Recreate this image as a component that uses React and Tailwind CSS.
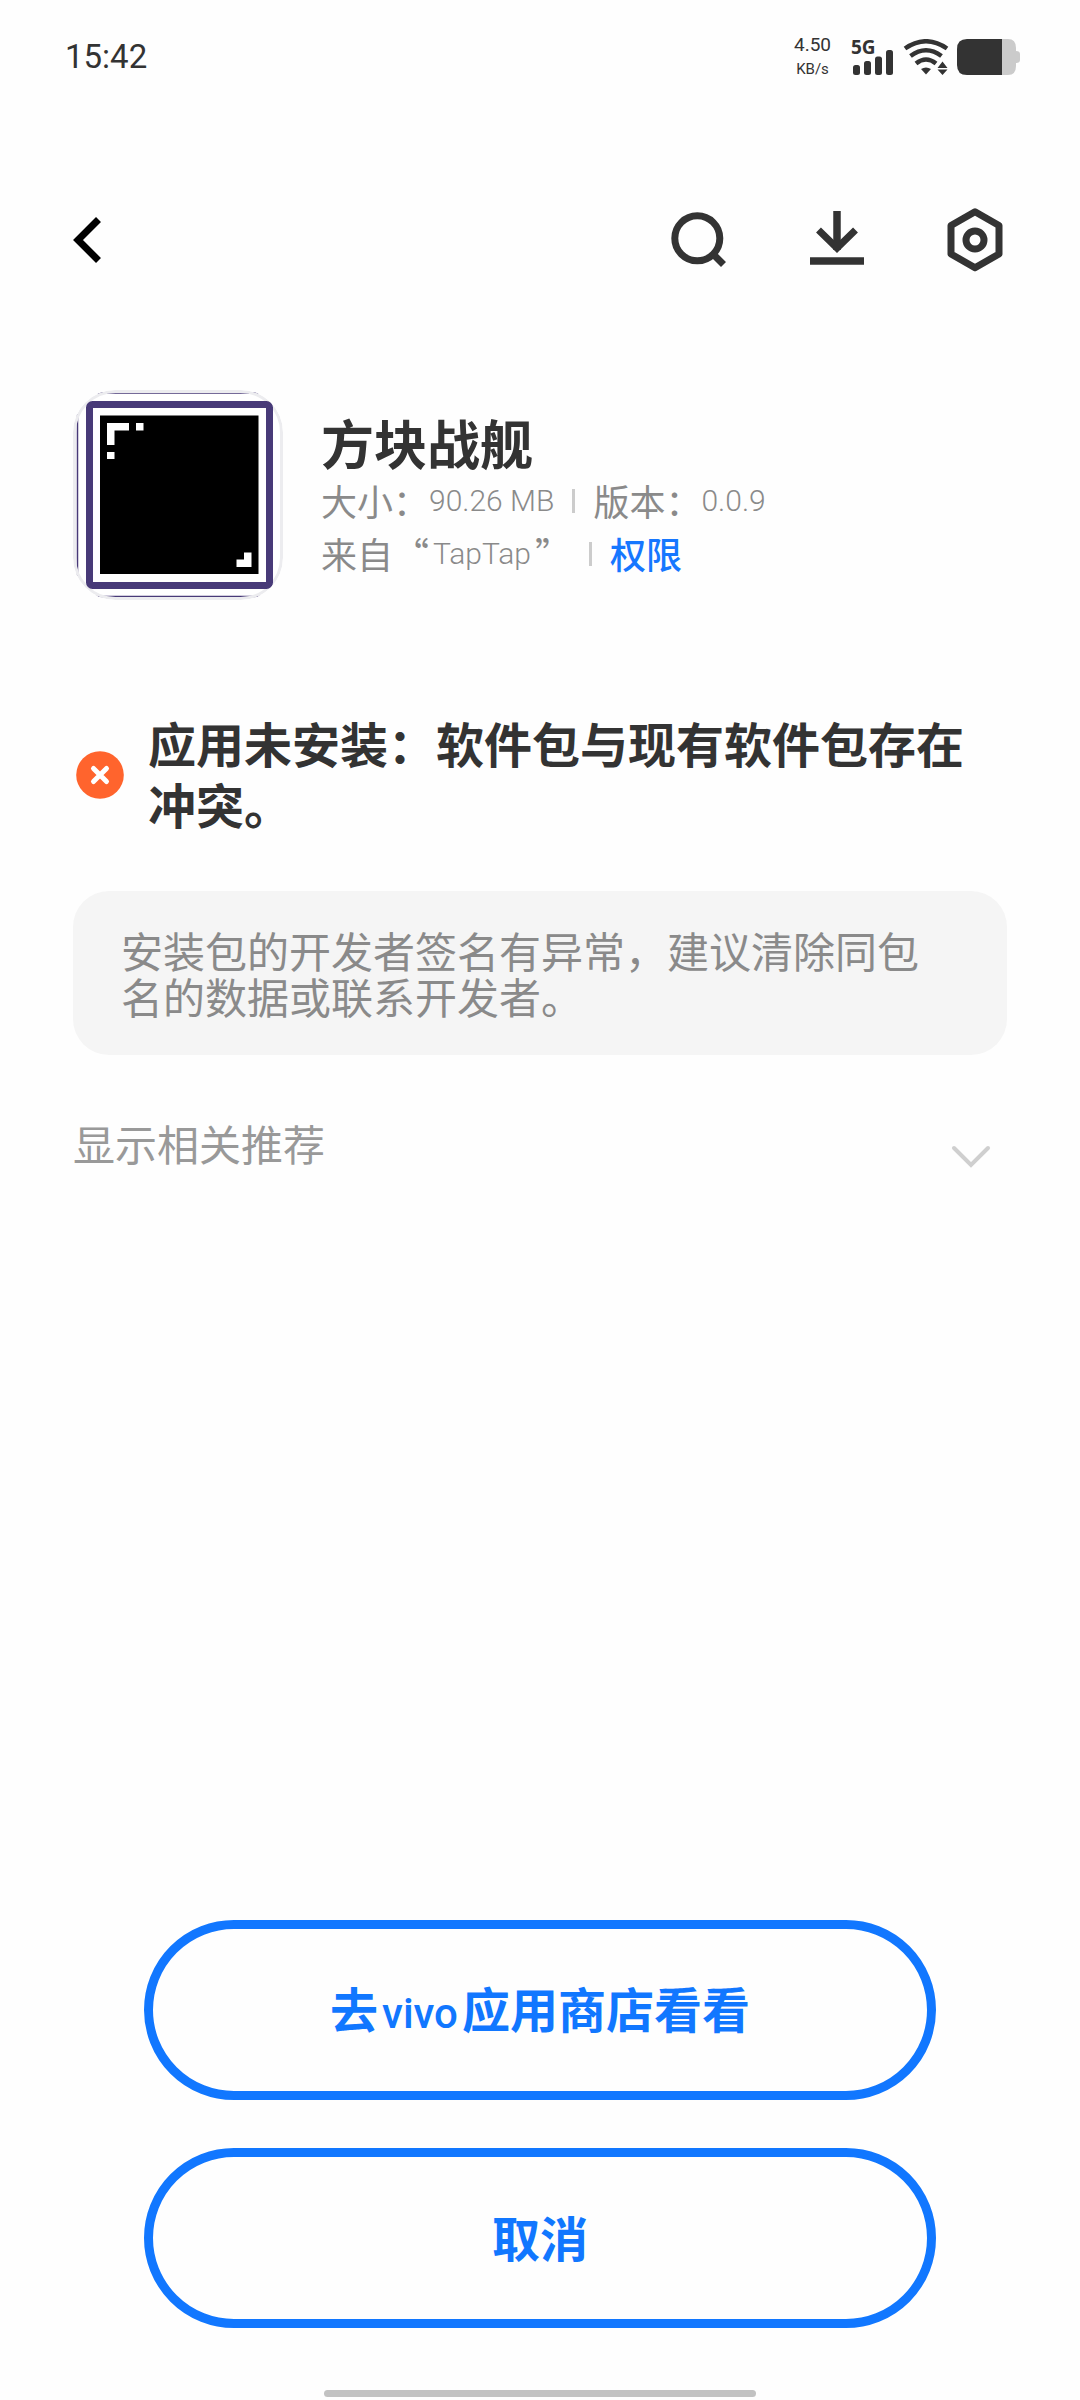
import React, { useState } from 'react'

const StatusBar = () => (
    <div className="flex items-center justify-between h-[114px] pl-[65px] pr-[60px] text-[#333333] font-['Roboto',sans-serif]">
        <span className="pb-0.5 text-[33px] leading-none">15:42</span>
        <div className="flex items-center">
            <div className="flex flex-col items-center leading-6">
                <span className="text-[19px]">4.50</span>
                <span className="text-[15px]">KB/s</span>
            </div>
            <div className="grid ml-5 w-[44px] h-9">
                <span className="[grid-area:1/1] text-[19px] leading-4 font-bold font-['Noto_Sans',sans-serif]">5G</span>
                <svg className="[grid-area:1/1] self-end" width="44" height="26" viewBox="0 0 44 26" fill="currentColor">
                    <rect x="2" y="16" width="7" height="10" rx="2.5" />
                    <rect x="13" y="12" width="7" height="14" rx="2.5" />
                    <rect x="24" y="7.5" width="7" height="18.5" rx="2.5" />
                    <rect x="35" y="1" width="7" height="25" rx="2.5" />
                </svg>
            </div>
            <svg className="ml-2" width="46" height="36" viewBox="0 0 46 36" fill="none" stroke="currentColor" strokeWidth="4.5">
                <path d="M2 9.5Q23 -5 44 9.5" />
                <path d="M7.5 17Q23 5.5 38.5 17" />
                <path d="M13 24.5Q23 16.5 33 24.5" />
                <path d="M18 30Q23 27 28 30L23 35.5Z" fill="currentColor" stroke="none" />
                <path d="M39.5 22.5L44.5 29H34.5ZM39.5 36L44.5 30.5H34.5Z" fill="currentColor" stroke="none" />
            </svg>
            <svg className="ml-2" width="63" height="36" viewBox="0 0 63 36">
                <path d="M45 0H51Q59 0 59 9V12Q63 12 63 15V21Q63 24 59 24V27Q59 36 51 36H45Z" fill="#cbcbcb" />
                <path d="M45 0H10Q0 0 0 10V26Q0 36 10 36H45Z" fill="#333333" />
            </svg>
        </div>
    </div>
)

const Header = () => (
    <header className="flex items-center justify-between pt-[94px] px-[73px] text-[#333333]">
        <button type="button" aria-label="返回">
            <svg width="32" height="64" viewBox="0 0 32 64" fill="none" stroke="#000" strokeWidth="7">
                <path d="M25.5 11.5L5 32L25.5 52.5" />
            </svg>
        </button>
        <div className="flex gap-[75px]">
            <button type="button" aria-label="搜索">
                <svg width="64" height="64" viewBox="0 0 64 64" fill="none" stroke="currentColor" strokeWidth="7">
                    <circle cx="32.3" cy="30.3" r="22.5" />
                    <path d="M48 46L58.5 56.5" />
                </svg>
            </button>
            <button type="button" aria-label="下载管理">
                <svg width="64" height="64" viewBox="0 0 64 64" fill="none" stroke="currentColor" strokeWidth="7.5">
                    <path d="M33 3V42" />
                    <path d="M14.5 22L33 40L51.5 22" strokeWidth="7" />
                    <path d="M6 53H60" />
                </svg>
            </button>
            <button type="button" aria-label="设置">
                <svg width="64" height="64" viewBox="0 0 64 64" fill="none" stroke="currentColor" strokeWidth="7" strokeLinejoin="round">
                    <path d="M32 3.8L56 17.5V46L32 59.8L8 46V17.5Z" />
                    <circle cx="32" cy="32" r="9" />
                </svg>
            </button>
        </div>
    </header>
)

const AppIcon = () => (
    <svg className="shrink-0 rounded-[42px]" width="210" height="210" viewBox="0 0 210 210">
        <rect width="210" height="210" fill="#fff" />
        <path d="M4.5 24V186M20 3H190M20 206.5H190" stroke="#483a78" strokeWidth="1.5" fill="none" />
        <rect x="1.5" y="1.5" width="207" height="207" rx="41" fill="none" stroke="#ececef" strokeWidth="3" />
        <rect x="16.5" y="14.5" width="180" height="181" rx="3" fill="#fff" stroke="#483a78" strokeWidth="7" />
        <rect x="27" y="25.5" width="158.5" height="158.5" fill="#000" />
        <path
            d="M34 33H56V40.5H41.5V55H34ZM63 33H70.5V40.5H63ZM34 62H41.5V69H34ZM171 162.5H178.5V177H163.5V169.5H171Z"
            fill="#fff"
        />
    </svg>
)

const Divider = () => <span className="w-[3px] h-6 bg-[#cccccc]" />

const AppInfo = () => (
    <section className="flex gap-[38px] pt-[118px] px-[73px]">
        <AppIcon />
        <div className="pt-6 text-[36px] leading-[53px] text-[#8a8a8a]">
            <h1 className="mb-1 text-[53px] leading-[56px] font-bold text-[#333333]">方块战舰</h1>
            <div className="flex items-center gap-[18px]">
                <span className="flex items-center">
                    大小：<span className="text-[30px] font-light font-['Roboto',sans-serif]">90.26 MB</span>
                </span>
                <Divider />
                <span className="flex items-center">
                    版本：<span className="text-[30px] font-light font-['Roboto',sans-serif]">0.0.9</span>
                </span>
            </div>
            <div className="flex items-center gap-[18px]">
                <span className="flex items-center">
                    来自“<span className="mx-1 text-[30px] font-light font-['Roboto',sans-serif]">TapTap</span>”
                </span>
                <Divider />
                <a href="#permissions" className="font-medium text-[#1677ff]">权限</a>
            </div>
        </div>
    </section>
)

const InstallError = () => (
    <section className="pt-[112px] px-[73px]">
        <div className="flex items-center gap-6 pl-[3px]">
            <svg className="shrink-0" width="48" height="48" viewBox="0 0 48 48">
                <circle cx="24" cy="24" r="23.8" fill="#ff642d" />
                <path d="M17.5 17.5L30.5 30.5M30.5 17.5L17.5 30.5" stroke="#fff" strokeWidth="5" strokeLinecap="round" />
            </svg>
            <h2 className="pb-1 text-[48px] leading-[61px] font-bold text-[#333333]">
                应用未安装：软件包与现有软件包存在冲突。
            </h2>
        </div>
        <p className="mt-[53px] px-12 py-9 rounded-[36px] bg-[#f5f5f5] text-[42px] leading-[46px] text-[#8a8a8a]">
            安装包的开发者签名有异常，建议清除同包名的数据或联系开发者。
        </p>
    </section>
)

const Recommendations = () => {
    const [open, setOpen] = useState(false)

    return (
        <button
            type="button"
            aria-expanded={open}
            onClick={() => setOpen(!open)}
            className="flex items-center justify-between mt-[58px] ml-[73px] mr-[88px] text-[42px] leading-[60px] text-[#999999]"
        >
            显示相关推荐
            <svg className="mt-7" width="42" height="24" viewBox="0 0 42 24" fill="none" stroke="#cfcfcf" strokeWidth="4" strokeLinecap="round">
                <path d="M4 3L21 20L38 3" />
            </svg>
        </button>
    )
}

const ACTION_CLASS =
    'w-full h-[180px] pb-1 rounded-full border-[9px] border-[#1177ff] text-[48px] font-bold text-[#1177ff]'

const App = () => (
    <div
        lang="zh-CN"
        className="flex flex-col min-h-screen bg-[#fefefe] font-['Noto_Sans_CJK_SC',sans-serif]"
    >
        <StatusBar />
        <Header />
        <main className="flex flex-col flex-1">
            <AppInfo />
            <InstallError />
            <Recommendations />
            <div className="flex flex-col gap-12 mt-auto pt-12 px-36">
                <button type="button" className={ACTION_CLASS}>
                    去<span className="mx-1 text-[42px] font-medium font-['Roboto',sans-serif]">vivo</span>应用商店看看
                </button>
                <button type="button" className={ACTION_CLASS}>取消</button>
            </div>
        </main>
        <div className="self-center w-2/5 h-[7px] mt-[62px] mb-[3px] rounded-full bg-[#c2c2c2]" />
    </div>
)

export default App
